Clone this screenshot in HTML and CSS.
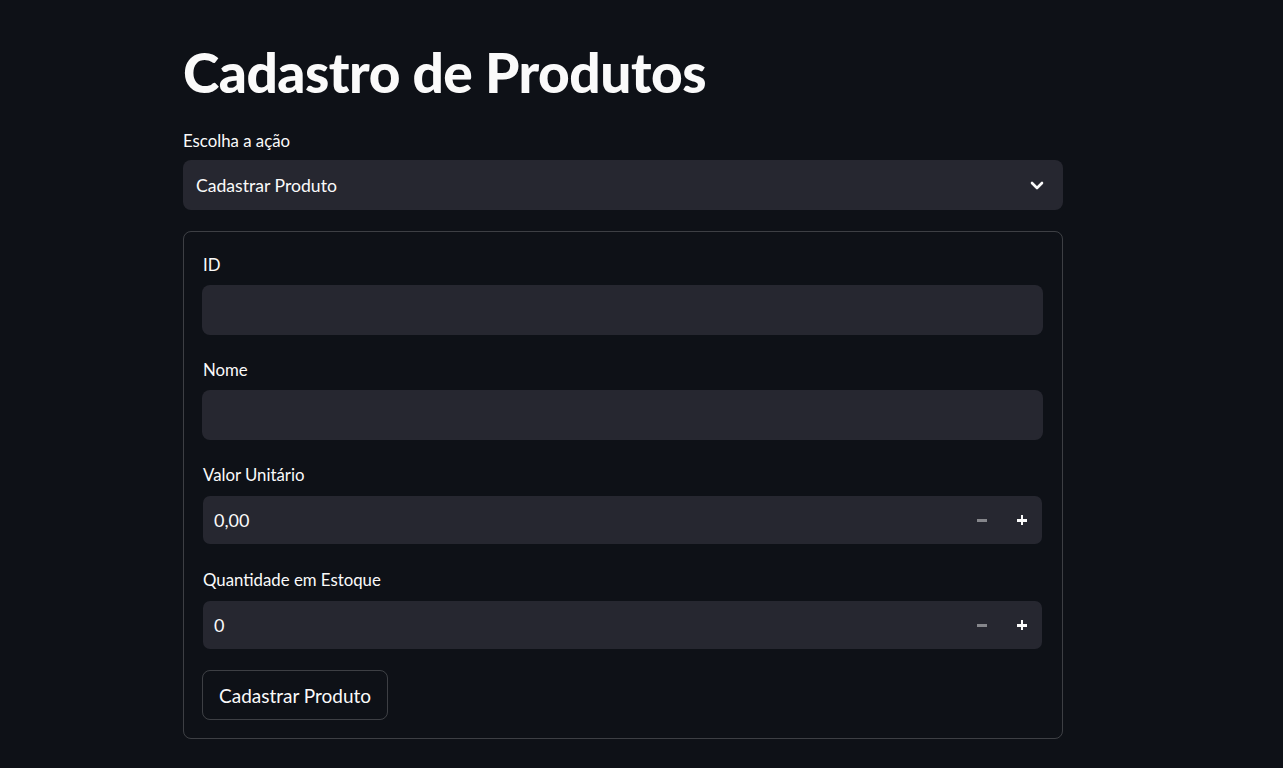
FILE: index.html
```html
<!DOCTYPE html>
<html lang="pt">
<head>
<meta charset="utf-8">
<title>Cadastro de Produtos</title>
<link rel="stylesheet" href="styles.css">
</head>
<body>
<main class="page">
  <h1 class="title">Cadastro de Produtos</h1>
  <div class="field select-field">
    <label class="label">Escolha a ação</label>
    <div class="select">
      <span class="select-value">Cadastrar Produto</span>
      <svg class="chevron" width="14" height="9" viewBox="0 0 14 9"><path d="M2 2l5 5 5-5" fill="none" stroke="#fafafa" stroke-width="2.6" stroke-linecap="round" stroke-linejoin="round"/></svg>
    </div>
  </div>
  <form class="form">
    <div class="field">
      <label class="label">ID</label>
      <div class="input"></div>
    </div>
    <div class="field">
      <label class="label">Nome</label>
      <div class="input"></div>
    </div>
    <div class="field">
      <label class="label">Valor Unitário</label>
      <div class="input number">
        <span class="number-value">0,00</span>
        <span class="step minus"></span>
        <span class="step plus"></span>
      </div>
    </div>
    <div class="field last">
      <label class="label">Quantidade em Estoque</label>
      <div class="input number">
        <span class="number-value">0</span>
        <span class="step minus"></span>
        <span class="step plus"></span>
      </div>
    </div>
    <button type="button" class="btn">Cadastrar Produto</button>
  </form>
</main>
</body>
</html>
```

FILE: styles.css
```css
html, body {
  margin: 0;
  background: #0e1117;
  color: #fafafa;
  font-family: Lato, "Noto Sans", sans-serif;
}
.page {
  width: 880px;
  padding: 36px 0 40px 183px;
}
.title {
  margin: 0 0 22px 0;
  font-size: 55px;
  font-weight: 900;
  line-height: 72px;
  letter-spacing: -0.5px;
}
.label {
  display: block;
  font-size: 16.8px;
  line-height: 22px;
  margin-bottom: 8px;
}
.select-field { margin-bottom: 21px; }
.select {
  height: 50px;
  background: #262730;
  border-radius: 8px;
  display: flex;
  align-items: center;
  padding: 0 19px 0 13px;
  box-sizing: border-box;
}
.select-value {
  flex: 1;
  font-size: 17.6px;
}
.chevron { display: block; }
.form {
  border: 1px solid rgba(250, 250, 250, 0.2);
  border-radius: 8px;
  padding: 22px 19px 18px 18px;
  margin: 0;
}
.form .label { margin-bottom: 9px; padding-left: 1px; }
.form .field { margin-bottom: 24px; }
.form .field.last { margin-bottom: 20px; }
.input {
  height: 50px;
  background: #262730;
  border-radius: 8px;
  box-sizing: border-box;
}
.input.number {
  border: 1px solid transparent;
  background-clip: padding-box;
  display: flex;
  align-items: center;
  padding: 0 15px 0 11px;
}
.number-value {
  flex: 1;
  font-size: 18px;
}
.step {
  position: relative;
  width: 10px;
  height: 10px;
}
.step.minus { margin-right: 30px; }
.step::before, .step::after {
  content: "";
  position: absolute;
  background: #fafafa;
}
.step::before { left: 0; top: 4px; width: 10px; height: 2.5px; }
.step.plus::after { left: 3.75px; top: 0; width: 2.5px; height: 10px; }
.step.minus::before { background: rgba(250, 250, 250, 0.45); }
.btn {
  height: 50px;
  padding: 0 16px;
  background: transparent;
  color: #fafafa;
  border: 1px solid rgba(250, 250, 250, 0.2);
  border-radius: 8px;
  font-family: inherit;
  font-size: 19px;
}
```
